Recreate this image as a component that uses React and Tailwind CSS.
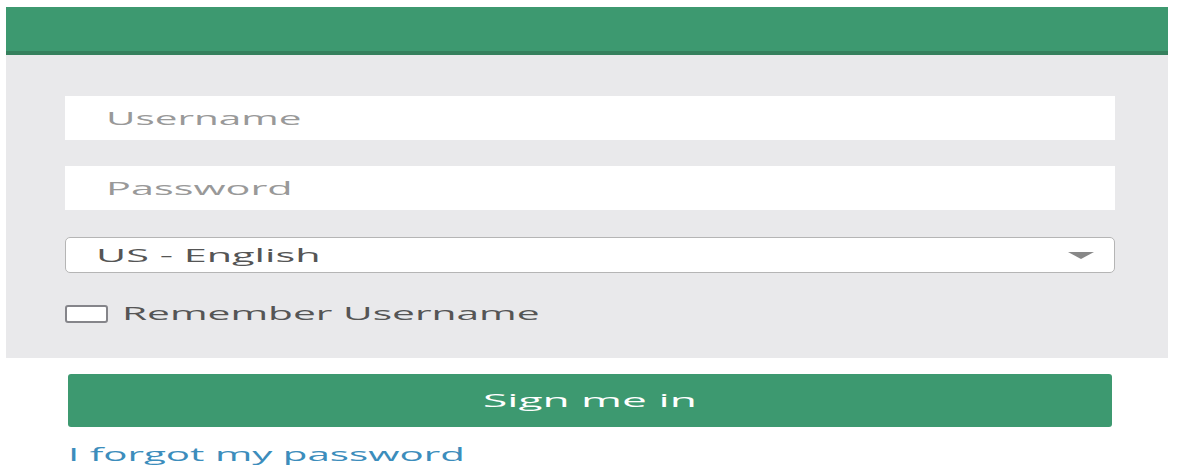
import React from 'react';

const font = "font-['Open_Sans','Liberation_Sans',sans-serif]";

const App = () => {
  return (
    <div className={`w-[1178px] h-[474px] bg-white pt-[7px] pl-[6px] ${font}`}>
      <div className="w-[1162px]">
        {/* header bar */}
        <div className="h-[48px] bg-[#3d9970] border-b-[4px] border-[#35805d]" />

        {/* form panel */}
        <div className="h-[303px] bg-[#e9e9eb] pt-[41px] pl-[59px] pr-[53px]">
          <div className="h-[44px] bg-white flex items-center pl-[41px]">
            <span className="inline-block origin-left scale-x-[2.13] text-[19px] text-[#999]">Username</span>
          </div>
          <div className="h-[44px] bg-white flex items-center pl-[41px] mt-[26px]">
            <span className="inline-block origin-left scale-x-[2.18] text-[19px] text-[#999]">Password</span>
          </div>
          <div className="h-[36px] bg-white border border-[#b5b5b5] rounded-[5px] flex items-center justify-between pl-[30px] pr-[20px] mt-[27px]">
            <span className="inline-block origin-left scale-x-[2.3] text-[18px] text-[#555]">US - English</span>
            <svg width="26" height="7" viewBox="0 0 26 7">
              <polygon points="0,0 26,0 13,7" fill="#888" />
            </svg>
          </div>
          <div className="flex items-center mt-[27px]">
            <div className="w-[43px] h-[18px] border-2 border-[#85858a] rounded-[3px] bg-white" />
            <span className="inline-block origin-left scale-x-[2.26] text-[18px] text-[#555] ml-[14px]">Remember Username</span>
          </div>
        </div>

        {/* sign in */}
        <div className="pl-[62px] pr-[56px] pt-[16px]">
          <button className="w-full h-[53px] bg-[#3d9970] rounded-[3px] flex items-center justify-center">
            <span className="inline-block scale-x-[2.33] text-[19px] text-white">Sign me in</span>
          </button>
          <div className="mt-[13px]">
            <span className="inline-block origin-left scale-x-[2.12] text-[19px] text-[#3c8dbc]">I forgot my password</span>
          </div>
        </div>
      </div>
    </div>
  );
};

export default App;
